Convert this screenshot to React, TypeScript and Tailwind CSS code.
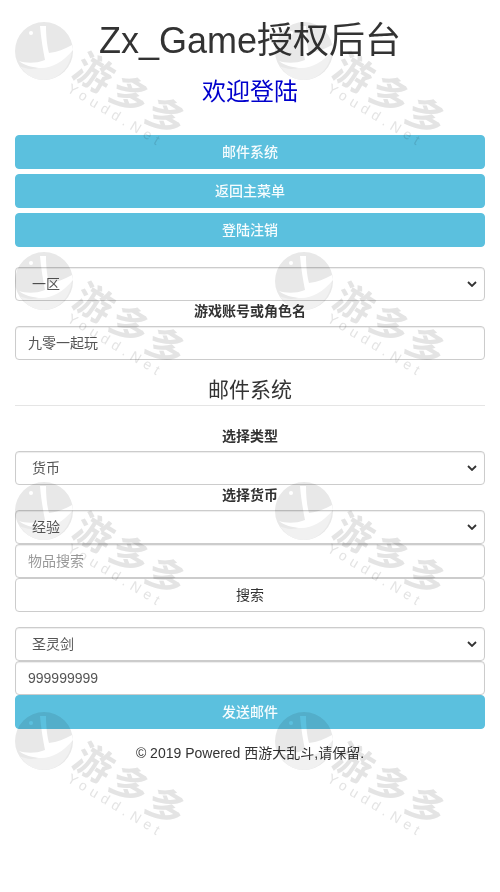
const font = "[font-family:'Liberation_Sans','Noto_Sans_CJK_SC',sans-serif]";

const Logo = () => (
  <svg viewBox="0 0 58 58" className="w-[58px] h-[58px]">
    <circle cx="29" cy="29" r="29" fill="#e8e8e8" />
    <path d="M5 44 C14 49 30 50 57 26 C57 45 43 58 29 58 C18 58 10 52 5 44 Z" fill="#f1f1f1" />
    <path d="M25 4 L31 4 C31 14 32 24 34 31 C42 30 50 27 57 23 L58 28 C48 40 36 47 24 46 C16 45 9 43 4 39 C10 41 20 42 30 38 C28 28 26 16 25 4 Z" fill="#fff" />
    <circle cx="16" cy="11" r="2" fill="#fff" />
  </svg>
);

const Watermark = () => (
  <div className="relative h-[230px] w-[260px]">
    <div className="absolute left-[15px] top-[22px]">
      <Logo />
    </div>
    <div className="absolute left-[88px] top-[46px] origin-top-left rotate-[31deg] text-[38px] leading-[42px] font-bold tracking-[4px] text-[#e4e4e4] whitespace-nowrap">
      游多多
    </div>
    <div className="absolute left-[73px] top-[80px] origin-top-left rotate-[31deg] text-[14px] leading-[16px] tracking-[5px] text-[#e4e4e4] whitespace-nowrap">
      Youdd.Net
    </div>
  </div>
);

const Btn = ({ label }: { label: string }) => (
  <button className="block w-full h-[34px] rounded border border-[#5bc0de] bg-[#5bc0de] text-[14px] font-medium text-white/95 text-center">
    {label}
  </button>
);

const Select = ({ value }: { value: string }) => (
  <div className="flex h-[34px] w-full items-center rounded border border-[#ccc] bg-white pl-4 pr-[7px] text-[14px] text-[#555] shadow-[inset_0_1px_1px_rgba(0,0,0,0.075)]">
    <span>{value}</span>
    <svg viewBox="0 0 10 6" className="ml-auto h-[6px] w-[10px]">
      <path d="M1 1 L5 5 L9 1" fill="none" stroke="#333" strokeWidth="1.8" />
    </svg>
  </div>
);

const Input = ({ value, muted = false }: { value: string; muted?: boolean }) => (
  <div className={`flex h-[34px] w-full items-center rounded border border-[#ccc] bg-white px-3 text-[14px] shadow-[inset_0_1px_1px_rgba(0,0,0,0.075)] ${muted ? 'text-[#999]' : 'text-[#555]'}`}>
    {value}
  </div>
);

const Label = ({ children }: { children: string }) => (
  <div className="h-[20px] text-center text-[14px] leading-[20px] font-bold text-[#333]">{children}</div>
);

const App = () => {
  return (
    <div className={`relative h-[892px] w-[500px] overflow-hidden bg-white ${font}`}>
      <div className="px-[15px]">
        <h1 className="pt-[19px] text-center text-[36px] leading-[44px] text-[#333]">Zx_Game授权后台</h1>
        <h3 className="mt-[10px] text-center text-[24px] leading-[38px] text-[#0000cc]">欢迎登陆</h3>

        <div className="mt-[24px] flex flex-col gap-[5px]">
          <Btn label="邮件系统" />
          <Btn label="返回主菜单" />
          <Btn label="登陆注销" />
        </div>

        <div className="mt-[20px]">
          <Select value="一区" />
        </div>
        <div className="mb-[5px]"><Label>游戏账号或角色名</Label></div>
        <Input value="九零一起玩" />

        <h3 className="mt-[17px] text-center text-[21px] leading-[26px] text-[#333]">邮件系统</h3>
        <div className="mt-[2px] border-t border-[#e5e5e5]" />

        <div className="mt-[20px] mb-[5px]"><Label>选择类型</Label></div>
        <Select value="货币" />
        <div className="mb-[5px]"><Label>选择货币</Label></div>
        <Select value="经验" />
        <Input value="物品搜索" muted />
        <button className="block h-[34px] w-full rounded border border-[#ccc] bg-white text-center text-[14px] text-[#333]">搜索</button>

        <div className="mt-[15px]">
          <Select value="圣灵剑" />
        </div>
        <Input value="999999999" />
        <Btn label="发送邮件" />

        <div className="mt-[14px] text-center text-[14px] leading-[20px] text-[#333]">© 2019 Powered 西游大乱斗,请保留.</div>
      </div>

      <div className="pointer-events-none absolute inset-0 grid grid-cols-[260px_260px] grid-rows-[230px_230px_230px_230px] mix-blend-multiply">
        {Array.from({ length: 8 }).map((_, i) => (
          <Watermark key={i} />
        ))}
      </div>
    </div>
  );
};

export default App;
